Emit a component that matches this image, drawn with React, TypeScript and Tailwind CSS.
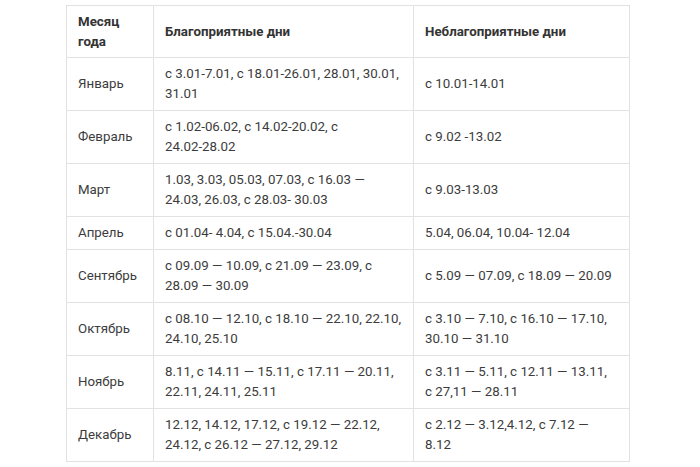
import { Fragment } from 'react';

const rows: [string, string, string][] = [
  ['Январь', 'с 3.01-7.01, с 18.01-26.01, 28.01, 30.01, 31.01', 'с 10.01-14.01'],
  ['Февраль', 'с 1.02-06.02, с 14.02-20.02, с 24.02-28.02', 'с 9.02 -13.02'],
  ['Март', '1.03, 3.03, 05.03, 07.03, с 16.03 — 24.03, 26.03, с 28.03- 30.03', 'с 9.03-13.03'],
  ['Апрель', 'с 01.04- 4.04, с 15.04.-30.04', '5.04, 06.04, 10.04- 12.04'],
  ['Сентябрь', 'с 09.09 — 10.09, с 21.09 — 23.09, с 28.09 — 30.09', 'с 5.09 — 07.09, с 18.09 — 20.09'],
  ['Октябрь', 'с 08.10 — 12.10, с 18.10 — 22.10, 22.10, 24.10, 25.10', 'с 3.10 — 7.10, с 16.10 — 17.10, 30.10 — 31.10'],
  ['Ноябрь', '8.11, с 14.11 — 15.11, с 17.11 — 20.11, 22.11, 24.11, 25.11', 'с 3.11 — 5.11, с 12.11 — 13.11, с 27,11 — 28.11'],
  ['Декабрь', '12.12, 14.12, 17.12, с 19.12 — 22.12, 24.12, с 26.12 — 27.12, 29.12', 'с 2.12 — 3.12,4.12, с 7.12 — 8.12'],
];

// keep hyphenated dates like 24.02-28.02 on one line, break only at spaces
function Words({ text }: { text: string }) {
  const parts = text.split(' ');
  return (
    <>
      {parts.map((w, i) => (
        <Fragment key={i}>
          <span className="whitespace-nowrap">{w}</span>
          {i < parts.length - 1 ? ' ' : null}
        </Fragment>
      ))}
    </>
  );
}

const cell = 'border border-[#e2e2e2] pl-[11px] align-middle';

export default function App() {
  return (
    <div className="w-[700px] h-[467px] bg-white pt-[5px] pl-[66px] font-['Roboto',sans-serif] text-[13.3px] leading-[20px] text-[#3c3c3c]">
      <table className="table-fixed border-collapse w-[563px]">
        <colgroup>
          <col className="w-[87px]" />
          <col className="w-[260px]" />
          <col className="w-[216px]" />
        </colgroup>
        <thead>
          <tr className="h-[52px]">
            <th className={`${cell} pr-[11px] py-[5px] text-left font-bold text-[#333]`}>Месяц года</th>
            <th className={`${cell} pr-[11px] py-[5px] text-left font-bold text-[#333]`}>Благоприятные дни</th>
            <th className={`${cell} pr-[14px] py-[5px] text-left font-bold text-[#333]`}>Неблагоприятные дни</th>
          </tr>
        </thead>
        <tbody>
          {rows.map(([m, good, bad]) => (
            <tr key={m}>
              <td className={`${cell} pr-[11px] py-[6px]`}>{m}</td>
              <td className={`${cell} pr-[11px] py-[6px]`}>
                <Words text={good} />
              </td>
              <td className={`${cell} pr-[14px] py-[6px]`}>
                <Words text={bad} />
              </td>
            </tr>
          ))}
        </tbody>
      </table>
    </div>
  );
}
